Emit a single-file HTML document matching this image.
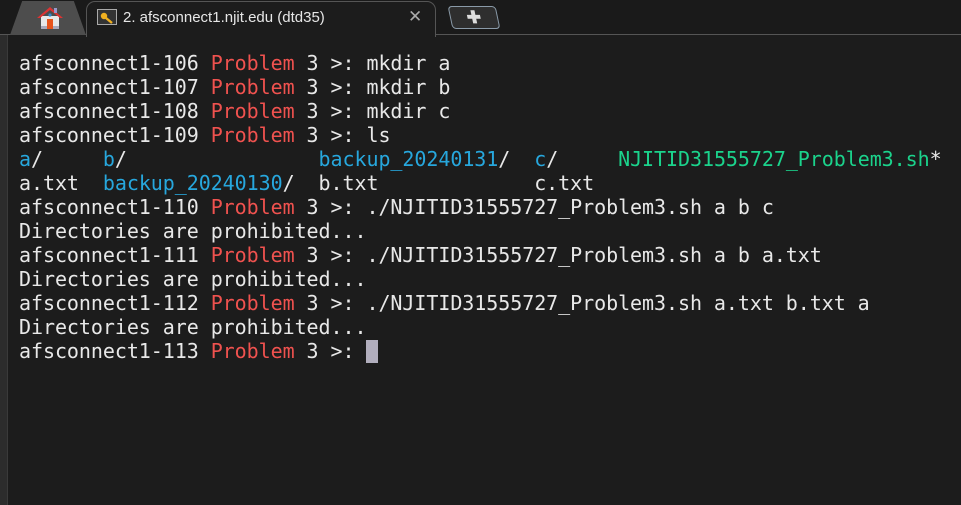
<!DOCTYPE html>
<html><head><style>
body{margin:0;width:961px;height:505px;background:#1c1c1c;overflow:hidden;position:relative;font-family:"DejaVu Sans Mono","Liberation Mono",monospace}
.bar{position:absolute;left:0;top:0;width:961px;height:35px;background:#1a1a1a}
.tabline{position:absolute;left:0;top:34px;width:961px;height:1px;background:#555}
.home{position:absolute;left:10px;top:1px;width:76px;height:34px;background:#4d4d4d;clip-path:polygon(16% 0,84% 0,100% 100%,0 100%)}
.act{position:absolute;left:86px;top:1px;width:350px;height:36px;background:#1c1c1c;border:1px solid #555;border-bottom:none;border-radius:9px 9px 0 0;box-sizing:border-box}
.ttl{position:absolute;left:123px;top:9px;font:15px "Liberation Sans",sans-serif;color:#e6e6e6}
.key{position:absolute;left:97px;top:9px;width:20px;height:16px;border:1px solid #aaa;box-sizing:border-box;background:#333}
.x{position:absolute;left:408px;top:7px;color:#aaa;font:17px "Liberation Sans",sans-serif}
.plus{position:absolute;left:450px;top:6px;width:46px;height:21px;background:#2e2e2e;border:1px solid #8a9aa8;border-radius:4px;transform:skewX(12deg);color:#ddd;text-align:center;font:bold 17px "Liberation Sans",sans-serif;line-height:21px}
.side{position:absolute;left:0;top:35px;width:7px;height:470px;background:#2c2c2c;border-right:1px solid #3a3a3a}
pre{position:absolute;left:19px;top:51px;margin:0;font-size:20px;letter-spacing:-0.06px;line-height:24px;color:#e8e8e8;font-family:"DejaVu Sans Mono",monospace}
.r{color:#f0524f}.b{color:#27a7dd}.g{color:#1bd38c}
.cur{position:absolute;left:366px;top:340px;width:12px;height:23px;background:#b1aebd}
</style></head><body>
<div class="bar"></div><div class="tabline"></div>
<div class="home"></div>
<svg style="position:absolute;left:36px;top:5px" width="28" height="26" viewBox="0 0 28 26"><rect x="5" y="11" width="18" height="12" fill="#e8e8e8"/><rect x="5" y="21" width="18" height="3" fill="#aab"/><polygon points="1,13 14,2 27,13 24,13 14,5 4,13" fill="#d33"/><rect x="18" y="3" width="3" height="5" fill="#99c"/><rect x="11" y="14" width="6" height="10" fill="#e8541c"/><circle cx="14" cy="10" r="1.6" fill="#38c"/></svg>
<div class="act"></div>
<div class="key"><svg width="18" height="14" viewBox="0 0 18 14"><circle cx="6" cy="5" r="3.2" fill="#f0b020"/><path d="M8 7 L14 12" stroke="#f0b020" stroke-width="2.4"/></svg></div>
<div class="ttl">2. afsconnect1.njit.edu (dtd35)</div>
<div class="x">✕</div>
<div class="plus">✚</div>
<div class="side"></div>
<pre>afsconnect1-106 <span class="r">Problem</span> 3 &gt;: mkdir a
afsconnect1-107 <span class="r">Problem</span> 3 &gt;: mkdir b
afsconnect1-108 <span class="r">Problem</span> 3 &gt;: mkdir c
afsconnect1-109 <span class="r">Problem</span> 3 &gt;: ls
<span class="b">a</span>/     <span class="b">b</span>/                <span class="b">backup_20240131</span>/  <span class="b">c</span>/     <span class="g">NJITID31555727_Problem3.sh</span>*
a.txt  <span class="b">backup_20240130</span>/  b.txt             c.txt
afsconnect1-110 <span class="r">Problem</span> 3 &gt;: ./NJITID31555727_Problem3.sh a b c
Directories are prohibited...
afsconnect1-111 <span class="r">Problem</span> 3 &gt;: ./NJITID31555727_Problem3.sh a b a.txt
Directories are prohibited...
afsconnect1-112 <span class="r">Problem</span> 3 &gt;: ./NJITID31555727_Problem3.sh a.txt b.txt a
Directories are prohibited...
afsconnect1-113 <span class="r">Problem</span> 3 &gt;: </pre>
<div class="cur"></div>
</body></html>
